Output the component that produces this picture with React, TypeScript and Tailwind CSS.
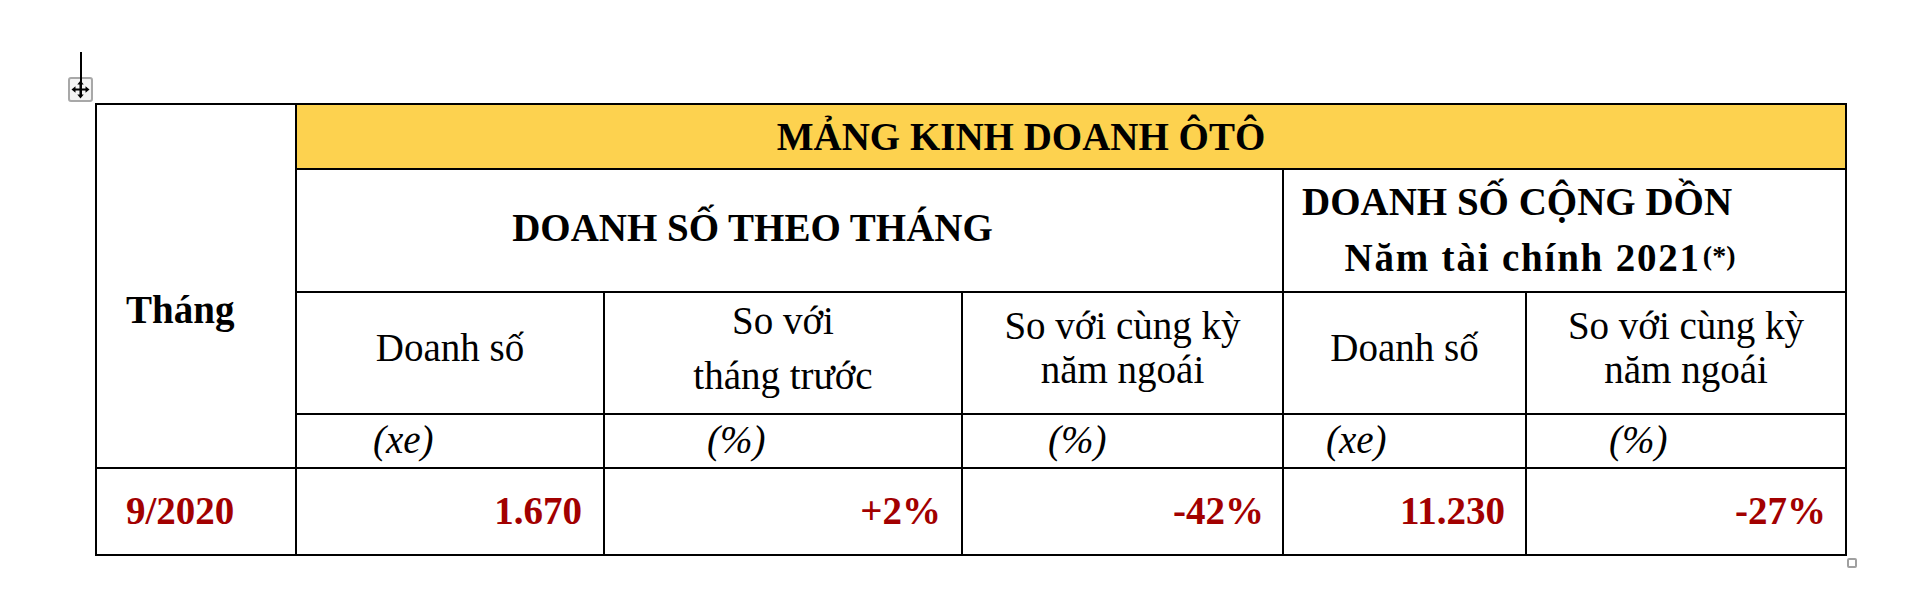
import React from "react";

const RED = "text-[#a20000]";

export default function App() {
  return (
    <div
      className="relative w-[1922px] h-[590px] bg-white overflow-hidden"
      style={{ fontFamily: '"Liberation Serif", "Times New Roman", serif' }}
    >
      {/* move handle */}
      <div className="absolute left-[68px] top-[77px] w-[25px] h-[25px] rounded-[3px] border-2 border-[#a8a8a8] bg-[#f4f4f4] flex items-center justify-center">
        <svg width="19" height="19" viewBox="0 0 19 19">
          <path d="M9.5 3 V16 M3 9.5 H16" stroke="#000" strokeWidth="2" />
          <path d="M9.5 0.5 L6.3 4.5 H12.7 Z" fill="#000" />
          <path d="M9.5 18.5 L6.3 14.5 H12.7 Z" fill="#000" />
          <path d="M0.5 9.5 L4.5 6.3 V12.7 Z" fill="#000" />
          <path d="M18.5 9.5 L14.5 6.3 V12.7 Z" fill="#000" />
        </svg>
      </div>
      {/* text cursor */}
      <div className="absolute left-[80px] top-[52px] w-[2px] h-[44px] bg-black" />
      {/* resize handle */}
      <div className="absolute left-[1847px] top-[558px] w-[10px] h-[10px] rounded-[2px] border-2 border-[#a0a0a0] bg-white" />

      <div className="pl-[95px] pt-[103px]">
        <table className="table-fixed border-collapse w-[1750px] text-black text-[39px] leading-[1.15]">
          <colgroup>
            <col className="w-[200px]" />
            <col className="w-[308px]" />
            <col className="w-[358px]" />
            <col className="w-[321px]" />
            <col className="w-[243px]" />
            <col className="w-[320px]" />
          </colgroup>
          <tbody>
            <tr className="h-[65px]">
              <td rowSpan={4} className="border-2 border-black align-middle pl-[29px] pt-[48px] font-bold">
                Tháng
              </td>
              <td colSpan={5} className="border-2 border-black bg-[#fdd24f] text-center font-bold align-middle pt-[2px] pr-[100px]">
                MẢNG KINH DOANH ÔTÔ
              </td>
            </tr>
            <tr className="h-[123px]">
              <td colSpan={3} className="border-2 border-black text-center font-bold align-middle pr-[74px] pb-[4px]">
                DOANH SỐ THEO THÁNG
              </td>
              <td colSpan={2} className="border-2 border-black text-center font-bold align-middle pl-[4px] pr-[99px] leading-[56px] pb-[2px]">
                <div className="whitespace-nowrap">DOANH SỐ CỘNG DỒN</div>
                <div className="whitespace-nowrap pl-[46px] tracking-[1.8px]">
                  Năm tài chính 2021<sup className="text-[28px] tracking-normal relative -top-[6px] ml-[2px]">(*)</sup>
                </div>
              </td>
            </tr>
            <tr className="h-[122px]">
              <td className="border-2 border-black text-center align-middle pb-[10px]">Doanh số</td>
              <td className="border-2 border-black text-center align-middle leading-[55px] pb-[10px]">
                <div>So với</div>
                <div>tháng trước</div>
              </td>
              <td className="border-2 border-black text-center align-middle leading-[44px] pb-[10px]">
                <div>So với cùng kỳ</div>
                <div>năm ngoái</div>
              </td>
              <td className="border-2 border-black text-center align-middle pb-[10px]">Doanh số</td>
              <td className="border-2 border-black text-center align-middle leading-[44px] pb-[10px]">
                <div>So với cùng kỳ</div>
                <div>năm ngoái</div>
              </td>
            </tr>
            <tr className="h-[54px] italic">
              <td className="border-2 border-black align-middle pl-[76px] pb-[2px]">(xe)</td>
              <td className="border-2 border-black align-middle pl-[102px] pb-[2px]">(%)</td>
              <td className="border-2 border-black align-middle pl-[85px] pb-[2px]">(%)</td>
              <td className="border-2 border-black align-middle pl-[42px] pb-[2px]">(xe)</td>
              <td className="border-2 border-black align-middle pl-[82px] pb-[2px]">(%)</td>
            </tr>
            <tr className={`h-[87px] font-bold ${RED}`}>
              <td className="border-2 border-black align-middle pl-[29px]">9/2020</td>
              <td className="border-2 border-black align-middle text-right pr-[21px]">1.670</td>
              <td className="border-2 border-black align-middle text-right pr-[20px]">+2%</td>
              <td className="border-2 border-black align-middle text-right pr-[18px]">-42%</td>
              <td className="border-2 border-black align-middle text-right pr-[20px]">11.230</td>
              <td className="border-2 border-black align-middle text-right pr-[19px]">-27%</td>
            </tr>
          </tbody>
        </table>
      </div>
    </div>
  );
}
